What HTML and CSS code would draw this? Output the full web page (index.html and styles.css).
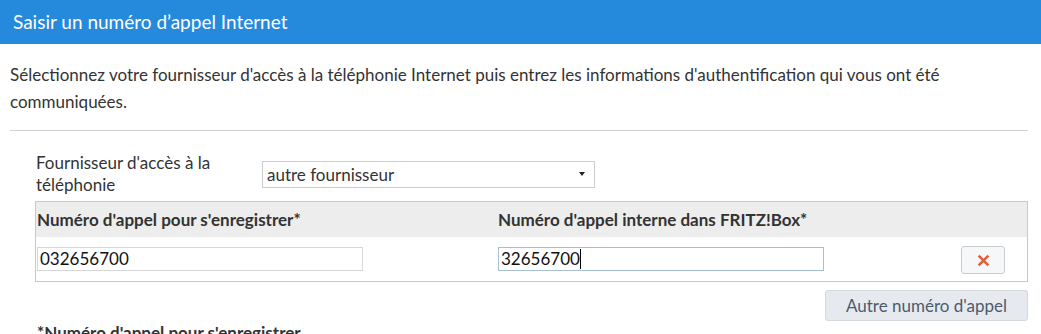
FILE: index.html
```html
<!DOCTYPE html>
<html lang="fr">
<head>
    <meta charset="UTF-8">
    <title>Saisir un numéro d'appel Internet</title>
    <link rel="stylesheet" href="styles.css">
</head>
<body>
    <header class="title-bar">Saisir un numéro d’appel Internet</header>

    <div class="content">
        <p class="intro">Sélectionnez votre fournisseur d'accès à la téléphonie Internet puis entrez les informations d'authentification qui vous ont été communiquées.</p>
        <hr class="sep">

        <div class="provider-row">
            <label class="provider-label">Fournisseur d'accès à la téléphonie</label>
            <div class="select-box">
                <span>autre fournisseur</span>
                <span class="caret"></span>
            </div>
        </div>

        <div class="num-table">
            <div class="num-head">
                <div class="col-a">Numéro d'appel pour s'enregistrer*</div>
                <div class="col-b">Numéro d'appel interne dans FRITZ!Box*</div>
            </div>
            <div class="num-row">
                <div class="col-a"><div class="field">032656700</div></div>
                <div class="col-b"><div class="field focus">32656700<span class="cursor"></span></div></div>
                <div class="col-c">
                    <button class="del-btn">
                        <svg width="13" height="13" viewBox="0 0 12 12">
                            <path d="M1.5 1.5L10.5 10.5M10.5 1.5L1.5 10.5" stroke="#e2603b" stroke-width="2.4"/>
                        </svg>
                    </button>
                </div>
            </div>
        </div>

        <div class="actions">
            <button class="more-btn">Autre numéro d'appel</button>
        </div>

        <p class="footnote">*Numéro d'appel pour s'enregistrer</p>
    </div>
</body>
</html>
```

FILE: styles.css
```css
body {
    margin: 0;
    padding: 0;
    font-family: Lato, "Open Sans", sans-serif;
    color: #333;
    background: #fff;
    overflow: hidden;
}

.title-bar {
    background-color: #2589dc;
    color: #fff;
    height: 44px;
    line-height: 44px;
    padding-left: 13px;
    font-size: 19px;
}

.content {
    padding: 0 13px 0 10px;
}

.intro {
    margin: 0;
    padding-top: 17px;
    font-size: 17px;
    line-height: 27px;
}

.sep {
    border: 0;
    border-top: 1px solid #d3d3d3;
    margin: 15px 0 0 0;
}

.provider-row {
    display: flex;
    align-items: center;
    padding: 21px 0 0 26px;
}

.provider-label {
    width: 226px;
    font-size: 17px;
    line-height: 22px;
}

.select-box {
    width: 318px;
    height: 25px;
    border: 1px solid #ccc;
    display: flex;
    align-items: center;
    justify-content: space-between;
    padding: 0 9px 0 4px;
    font-size: 17px;
}

.caret {
    width: 0;
    height: 0;
    border-left: 3px solid transparent;
    border-right: 3px solid transparent;
    border-top: 4px solid #222;
}

.num-table {
    margin: 5px 0 0 25px;
    border: 1px solid #c8c8c8;
}

.num-head {
    display: flex;
    background: #ededed;
    height: 35px;
    align-items: center;
    font-weight: bold;
    font-size: 17px;
    color: #333;
}

.num-row {
    display: flex;
    height: 44px;
    align-items: center;
}

.col-a {
    width: 461px;
    padding-left: 1px;
}

.col-b {
    width: 463px;
}

.col-c {
    flex: 1;
}

.field {
    width: 322px;
    height: 22px;
    border: 1px solid #d6d6d6;
    font-size: 17px;
    line-height: 22px;
    padding-left: 2px;
    color: #111;
}

.field.focus {
    border-color: #a7bfd4;
}

.cursor {
    display: inline-block;
    width: 1px;
    height: 20px;
    background: #000;
    vertical-align: -4px;
}

.del-btn {
    width: 44px;
    height: 28px;
    border: 1px solid #c9ccd0;
    border-radius: 3px;
    background: #f6f7f8;
    display: flex;
    align-items: center;
    justify-content: center;
    margin-top: 2px;
}

.actions {
    display: flex;
    justify-content: flex-end;
    margin-top: 8px;
}

.more-btn {
    width: 203px;
    height: 31px;
    background: #e6eaef;
    border: 1px solid #d4d9de;
    border-radius: 3px;
    font-family: inherit;
    font-size: 17px;
    color: #4d5a6e;
}

.footnote {
    margin: 1px 0 0 27px;
    font-size: 17px;
    line-height: 22px;
    font-weight: bold;
}
```
